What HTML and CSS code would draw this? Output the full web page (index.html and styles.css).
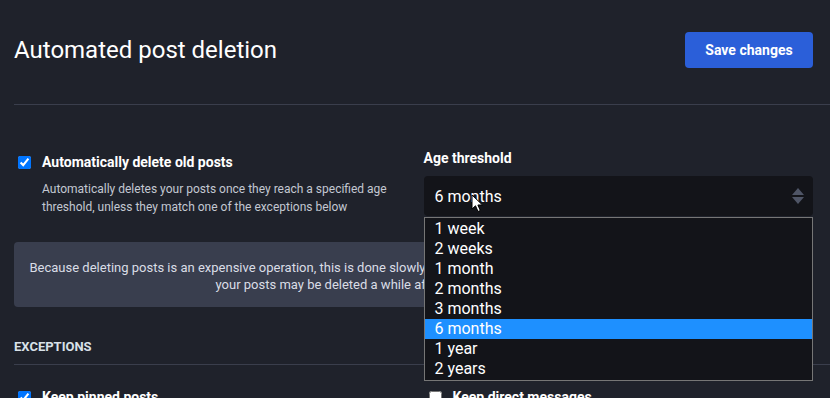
FILE: index.html
```html
<!DOCTYPE html>
<html lang="en">
<head>
  <meta charset="UTF-8" />
  <meta name="viewport" content="width=device-width, initial-scale=1.0" />
  <title>Automated post deletion</title>
  <link rel="stylesheet" href="styles.css">
</head>
<body>
  <div class="page">
    <div class="page-header">
      <h1>Automated post deletion</h1>
      <button class="btn-save">Save changes</button>
    </div>

    <div class="fields-row">
      <div class="field">
        <label class="check-label">
          <input type="checkbox" checked />
          <span>Automatically delete old posts</span>
        </label>
        <p class="hint">Automatically deletes your posts once they reach a specified age threshold, unless they match one of the exceptions below</p>
      </div>
      <div class="field">
        <div class="field-label">Age threshold</div>
        <div class="select">
          <span>6 months</span>
          <svg class="select-arrows" width="14" height="18" viewBox="0 0 14 18">
            <path d="M7 1 L13 8 L1 8 Z" fill="#4f5566" />
            <path d="M1 10 L13 10 L7 17 Z" fill="#4f5566" />
          </svg>
          <svg class="cursor" width="13" height="20" viewBox="0 0 13 20">
            <path d="M1 1 L1 15 L4.5 11.8 L7 17.5 L9.3 16.5 L6.9 11 L11.5 11 Z" fill="#fff" stroke="#000" stroke-width="1" />
          </svg>
          <ul class="select-menu">
            <li>1 week</li>
            <li>2 weeks</li>
            <li>1 month</li>
            <li>2 months</li>
            <li>3 months</li>
            <li class="selected">6 months</li>
            <li>1 year</li>
            <li>2 years</li>
          </ul>
        </div>
      </div>
    </div>

    <div class="info-box">
      Because deleting posts is an expensive operation, this is done slowly over time when the server is not otherwise busy. For this reason, your posts may be deleted a while after they reach the age threshold.
    </div>

    <h4 class="section-title">Exceptions</h4>

    <div class="fields-row exceptions">
      <div class="field">
        <label class="check-label">
          <input type="checkbox" checked />
          <span>Keep pinned posts</span>
        </label>
      </div>
      <div class="field">
        <label class="check-label">
          <input type="checkbox" />
          <span>Keep direct messages</span>
        </label>
      </div>
    </div>
  </div>
</body>
</html>
```

FILE: styles.css
```css
body {
  font-family: Roboto, "Liberation Sans", sans-serif;
  background: #1f222b;
  color: #fff;
  margin: 0;
  padding: 0;
  overflow: hidden;
}
.page {
  padding-left: 14px;
}
.page-header {
  display: flex;
  justify-content: space-between;
  align-items: center;
  padding: 32px 17px 36px 0;
  border-bottom: 1px solid #3a3e4c;
}
.page-header h1 {
  margin: 0;
  font-size: 24px;
  font-weight: 400;
  line-height: 36px;
}
.btn-save {
  width: 128px;
  height: 36px;
  background: #2b5fd9;
  color: #fff;
  border: none;
  border-radius: 4px;
  font-family: inherit;
  font-size: 14px;
  font-weight: 700;
  cursor: pointer;
}
.fields-row {
  display: grid;
  grid-template-columns: 1fr 1fr;
  column-gap: 20px;
  margin-right: 17px;
  margin-top: 43px;
}
.field {
  position: relative;
}
.check-label {
  display: flex;
  align-items: center;
  font-size: 14px;
  font-weight: 700;
  line-height: 20px;
  margin-top: 4px;
}
.check-label input {
  width: 13px;
  height: 13px;
  margin: 0 11px 0 4px;
}
.hint {
  margin: 8px 0 0 28px;
  font-size: 12px;
  line-height: 18px;
  color: #c3c8d2;
}
.field-label {
  font-size: 14px;
  font-weight: 700;
  line-height: 20px;
  margin-bottom: 8px;
}
.select {
  position: relative;
  display: flex;
  align-items: center;
  justify-content: space-between;
  height: 40px;
  padding: 0 8px 0 11px;
  background: #131419;
  border-radius: 4px;
  font-size: 16px;
}
.select-arrows {
  display: block;
}
.cursor {
  position: absolute;
  left: 47px;
  top: 18px;
}
.select-menu {
  position: absolute;
  top: 41px;
  left: 0;
  right: 0;
  margin: 0;
  padding: 1px 0;
  list-style: none;
  background: #131419;
  border: 1px solid #767676;
  z-index: 2;
}
.select-menu li {
  height: 20px;
  line-height: 20px;
  padding-left: 10px;
  font-size: 16px;
}
.select-menu li.selected {
  background: #1e90ff;
}
.info-box {
  margin: 26px 17px 0 0;
  padding: 17px 8px 14px;
  background: #393e4e;
  border-radius: 4px;
  font-size: 13px;
  line-height: 17px;
  text-align: center;
  color: #d9dde6;
}
.section-title {
  margin: 30px 0 0;
  padding-bottom: 7px;
  border-bottom: 1px solid #3a3e4c;
  font-size: 13px;
  font-weight: 700;
  line-height: 20px;
  text-transform: uppercase;
  color: #d9e1e8;
}
.exceptions {
  margin-top: 18px;
}
.exceptions .field:last-child .check-label input {
  margin-left: 5px;
}
```
